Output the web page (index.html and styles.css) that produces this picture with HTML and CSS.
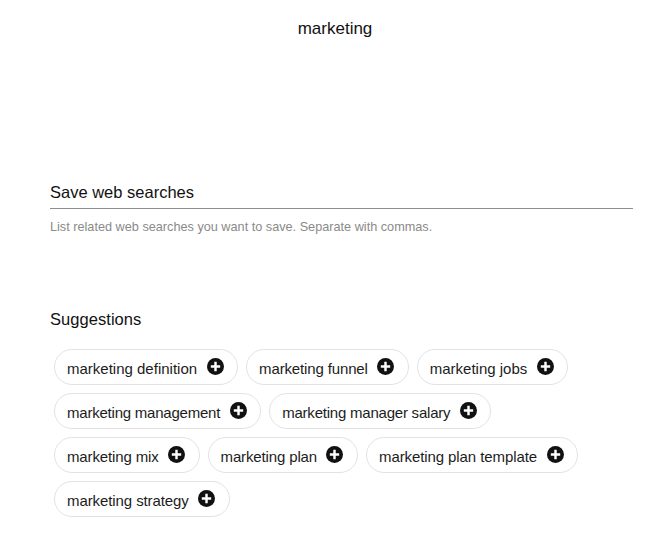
FILE: index.html
```html
<!DOCTYPE html>
<html>
<head><meta charset="utf-8"><title>marketing</title><link rel="stylesheet" href="styles.css"></head>
<body>
<main class="page">
  <h1 class="title">marketing</h1>
  <section class="save">
    <h2 class="heading">Save web searches</h2>
    <p class="hint">List related web searches you want to save. Separate with commas.</p>
  </section>
  <section class="suggestions">
    <h2 class="heading">Suggestions</h2>
    <ul class="chips">
      <li class="chip"><span class="label">marketing definition</span><svg class="plus" viewBox="0 0 16 16"><circle cx="8" cy="8" r="8"/><path d="M8 3.6v8.8M3.6 8h8.8"/></svg></li>
      <li class="chip"><span class="label t2">marketing funnel</span><svg class="plus" viewBox="0 0 16 16"><circle cx="8" cy="8" r="8"/><path d="M8 3.6v8.8M3.6 8h8.8"/></svg></li>
      <li class="chip"><span class="label">marketing jobs</span><svg class="plus" viewBox="0 0 16 16"><circle cx="8" cy="8" r="8"/><path d="M8 3.6v8.8M3.6 8h8.8"/></svg></li>
      <li class="chip"><span class="label t3">marketing management</span><svg class="plus" viewBox="0 0 16 16"><circle cx="8" cy="8" r="8"/><path d="M8 3.6v8.8M3.6 8h8.8"/></svg></li>
      <li class="chip"><span class="label t3">marketing manager salary</span><svg class="plus" viewBox="0 0 16 16"><circle cx="8" cy="8" r="8"/><path d="M8 3.6v8.8M3.6 8h8.8"/></svg></li>
      <li class="chip"><span class="label t2">marketing mix</span><svg class="plus" viewBox="0 0 16 16"><circle cx="8" cy="8" r="8"/><path d="M8 3.6v8.8M3.6 8h8.8"/></svg></li>
      <li class="chip"><span class="label t2">marketing plan</span><svg class="plus" viewBox="0 0 16 16"><circle cx="8" cy="8" r="8"/><path d="M8 3.6v8.8M3.6 8h8.8"/></svg></li>
      <li class="chip"><span class="label t1">marketing plan template</span><svg class="plus" viewBox="0 0 16 16"><circle cx="8" cy="8" r="8"/><path d="M8 3.6v8.8M3.6 8h8.8"/></svg></li>
      <li class="chip"><span class="label t1">marketing strategy</span><svg class="plus" viewBox="0 0 16 16"><circle cx="8" cy="8" r="8"/><path d="M8 3.6v8.8M3.6 8h8.8"/></svg></li>
    </ul>
  </section>
</main>
</body>
</html>
```
FILE: styles.css
```css
* { box-sizing: border-box; }
html, body { margin: 0; padding: 0; background: #fff; }
body { font-family: "Liberation Sans", Arial, sans-serif; color: #111; }
.page { width: 646px; height: 556px; padding: 19px 13px 0 50px; overflow: hidden; }
.title { margin: 0; height: 20px; font-size: 17px; line-height: 20px; font-weight: 400; text-align: center; padding-right: 13px; }
.save { margin-top: 143px; }
.heading { margin: 0; font-size: 16.5px; line-height: 20px; font-weight: 400; color: #111; }
.save .heading { padding-bottom: 6px; border-bottom: 1px solid #8e8e8e; }
.hint { margin: 10px 0 0; font-size: 12.7px; line-height: 16px; color: #8a8a8a; }
.suggestions { margin-top: 74px; }
.suggestions .heading { letter-spacing: 0.05px; }
.chips { list-style: none; margin: 20px 0 0; padding: 0 0 0 4px; display: flex; flex-wrap: wrap; gap: 8px; }
.chip { height: 36px; display: flex; align-items: center; gap: 9.5px; padding: 0 13.5px 0 12px; border: 1px solid #e2e2e2; border-radius: 18px; font-size: 15px; color: #1c1c1c; }
.label { margin-top: 3px; }
.t1 { letter-spacing: -0.09px; }
.t2 { letter-spacing: -0.14px; }
.t3 { letter-spacing: -0.22px; }
.plus { width: 17px; height: 17px; flex: none; margin-top: -1px; }
.plus circle { fill: #111; }
.plus path { stroke: #fff; stroke-width: 2.3; fill: none; }
```
